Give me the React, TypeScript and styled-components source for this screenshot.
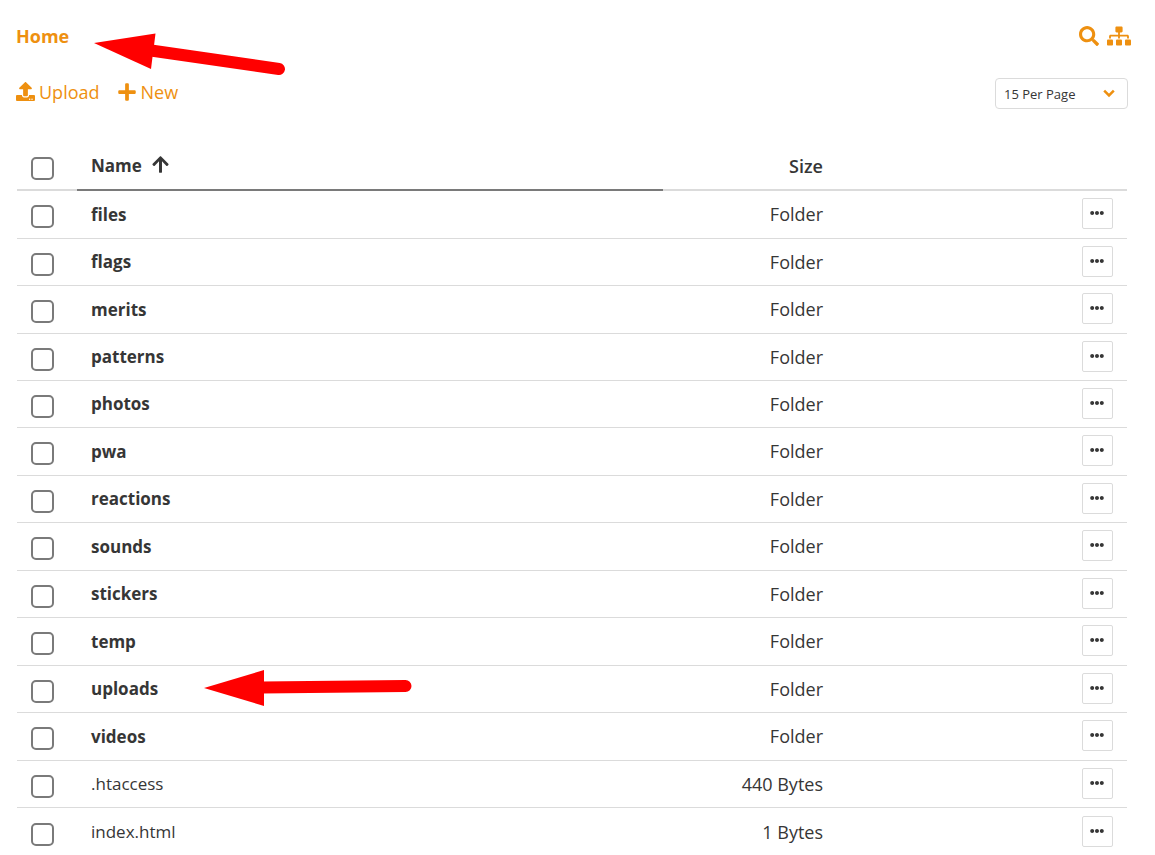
import React from "react";
import styled, { createGlobalStyle } from "styled-components";
import {
  FaArrowUp,
  FaEllipsisH,
  FaPlus,
  FaSearch,
  FaSitemap,
  FaUpload,
} from "react-icons/fa";

const accent = "#ee9010";
const ink = "#363636";
const line = "#dbdbdb";

const GlobalStyle = createGlobalStyle`
  *, *::before, *::after { box-sizing: border-box; }
  body {
    margin: 0;
    background: #fff;
    color: ${ink};
    font-family: "Open Sans", "Noto Sans", sans-serif;
    font-size: 18px;
    line-height: 24px;
  }
  button, select, input { font: inherit; color: inherit; }
`;

const Page = styled.main`
  padding: 0 24px 0 16px;
`;

const TopBar = styled.header`
  display: flex;
  align-items: center;
  justify-content: space-between;
  height: 72px;
`;

const Breadcrumb = styled.nav`
  position: relative;
`;

const HomeLink = styled.a`
  color: ${accent};
  font-weight: 700;
  text-decoration: none;
`;

const Tools = styled.div`
  display: flex;
  align-items: center;
  gap: 8px;
`;

const TextButton = styled.button`
  display: flex;
  align-items: center;
  gap: 4px;
  padding: 0;
  border: 0;
  background: none;
  color: ${accent};
  cursor: pointer;
`;

const Toolbar = styled.div`
  display: flex;
  align-items: center;
  justify-content: space-between;
  padding: 6px 3px 0 0;
`;

const Actions = styled.div`
  display: flex;
  gap: 17px;
  padding-bottom: 4px;
`;

const SelectBox = styled.div`
  position: relative;
  width: 133px;
  color: ${accent};

  svg {
    position: absolute;
    right: 13px;
    top: 10px;
    pointer-events: none;
  }
`;

const PerPage = styled.select`
  appearance: none;
  display: block;
  width: 100%;
  height: 31px;
  padding: 0 8px;
  border: 1px solid ${line};
  border-radius: 4px;
  background: #fff;
  color: ${ink};
  font-size: 13px;
`;

const TableArea = styled.section`
  padding: 34px 4px 0 1px;
`;

const Table = styled.table`
  width: 100%;
  table-layout: fixed;
  border-collapse: separate;
  border-spacing: 0;
`;

const Column = styled.col<{ $width?: number }>`
  width: ${(p) => (p.$width ? `${p.$width}px` : "auto")};
`;

const HeadCell = styled.th<{ $sorted?: boolean; $end?: boolean }>`
  height: 48px;
  padding: 0 14px;
  border-bottom: 2px solid ${(p) => (p.$sorted ? "#7a7a7a" : line)};
  text-align: ${(p) => (p.$end ? "right" : "left")};
  font-weight: 600;
`;

const SortButton = styled.button`
  display: flex;
  align-items: center;
  gap: 9px;
  padding: 0;
  border: 0;
  background: none;
  font-size: 17px;
  font-weight: 700;
  cursor: pointer;

  svg {
    margin-bottom: 3px;
  }
`;

const Row = styled.tr`
  height: 47px;

  &:nth-child(-2n + 3),
  &:nth-child(2n + 6) {
    height: 48px;
  }
  &:last-child td {
    border-bottom: 0;
  }
`;

const Cell = styled.td<{ $end?: boolean }>`
  padding: 0 14px 1px;
  border-bottom: 1px solid ${line};
  text-align: ${(p) => (p.$end ? "right" : "left")};
`;

const Checkbox = styled.input`
  appearance: none;
  display: block;
  width: 23px;
  height: 23px;
  margin: 4px 0 0;
  border: 2px solid #7a7a7a;
  border-radius: 5px;
  background: #fff;

  td & {
    margin-top: 5px;
  }
  &:checked {
    border-color: ${accent};
    background: ${accent};
  }
`;

const NameWrap = styled.div`
  position: relative;
`;

const NameLink = styled.a<{ $folder: boolean }>`
  color: inherit;
  font-size: 17px;
  font-weight: ${(p) => (p.$folder ? 700 : 400)};
  text-decoration: none;
`;

const MoreButton = styled.button`
  display: flex;
  justify-content: center;
  width: 31px;
  height: 31px;
  margin: 0 0 1px auto;
  padding: 7px 1px 0 0;
  border: 1px solid ${line};
  border-radius: 2px;
  background: #fff;
  cursor: pointer;
`;

const Pointer = styled.svg<{ $left: number; $top: number }>`
  position: absolute;
  left: ${(p) => p.$left}px;
  top: ${(p) => p.$top}px;
  pointer-events: none;
`;

type Entry = { name: string; size: string };

const entries: Entry[] = [
  { name: "files", size: "Folder" },
  { name: "flags", size: "Folder" },
  { name: "merits", size: "Folder" },
  { name: "patterns", size: "Folder" },
  { name: "photos", size: "Folder" },
  { name: "pwa", size: "Folder" },
  { name: "reactions", size: "Folder" },
  { name: "sounds", size: "Folder" },
  { name: "stickers", size: "Folder" },
  { name: "temp", size: "Folder" },
  { name: "uploads", size: "Folder" },
  { name: "videos", size: "Folder" },
  { name: ".htaccess", size: "440 Bytes" },
  { name: "index.html", size: "1 Bytes" },
];

function FileRow({ name, size }: Entry) {
  return (
    <Row>
      <Cell>
        <Checkbox type="checkbox" aria-label={`Select ${name}`} />
      </Cell>
      <Cell>
        <NameWrap>
          <NameLink href="#" $folder={size === "Folder"}>
            {name}
          </NameLink>
          {name === "uploads" && (
            <Pointer $left={113} $top={-7} width={210} height={38} viewBox="0 0 210 38" aria-hidden>
              <path d="M0 19 60 1V37Z" fill="red" />
              <path d="M58 18.500 201.500 17" stroke="red" strokeWidth="12" strokeLinecap="round" />
            </Pointer>
          )}
        </NameWrap>
      </Cell>
      <Cell $end>{size}</Cell>
      <Cell>
        <MoreButton type="button" aria-label={`Actions for ${name}`}>
          <FaEllipsisH size={14} />
        </MoreButton>
      </Cell>
    </Row>
  );
}

export default function App() {
  return (
    <Page>
      <GlobalStyle />
      <TopBar>
        <Breadcrumb aria-label="Breadcrumb">
          <HomeLink href="#">Home</HomeLink>
          <Pointer $left={78} $top={0} width={194} height={52} viewBox="0 0 194 52" aria-hidden>
            <path d="M0 19 61.500 9.500 57 45Z" fill="red" />
            <path d="M57 26.500 185 45" stroke="red" strokeWidth="12" strokeLinecap="round" />
          </Pointer>
        </Breadcrumb>
        <Tools>
          <TextButton type="button" aria-label="Search">
            <FaSearch size={20} />
          </TextButton>
          <TextButton type="button" aria-label="Folder tree">
            <FaSitemap size={24} />
          </TextButton>
        </Tools>
      </TopBar>
      <Toolbar>
        <Actions>
          <TextButton type="button">
            <FaUpload size={19} />
            Upload
          </TextButton>
          <TextButton type="button">
            <FaPlus size={20} />
            New
          </TextButton>
        </Actions>
        <SelectBox>
          <PerPage aria-label="Items per page" defaultValue="15">
            <option value="15">15 Per Page</option>
            <option value="30">30 Per Page</option>
            <option value="50">50 Per Page</option>
          </PerPage>
          <svg width={12} height={10} viewBox="0 0 12 10" aria-hidden>
            <path d="M1.200 2.600 6 7.400 10.800 2.600" fill="none" stroke="currentColor" strokeWidth="2.500" />
          </svg>
        </SelectBox>
      </Toolbar>
      <TableArea>
        <Table>
          <colgroup>
            <Column $width={60} />
            <Column />
            <Column $width={174} />
            <Column $width={290} />
          </colgroup>
          <thead>
            <tr>
              <HeadCell>
                <Checkbox type="checkbox" aria-label="Select all" />
              </HeadCell>
              <HeadCell $sorted aria-sort="ascending">
                <SortButton type="button">
                  Name
                  <FaArrowUp size={19} />
                </SortButton>
              </HeadCell>
              <HeadCell $end>Size</HeadCell>
              <HeadCell aria-label="Actions" />
            </tr>
          </thead>
          <tbody>
            {entries.map((entry) => (
              <FileRow key={entry.name} {...entry} />
            ))}
          </tbody>
        </Table>
      </TableArea>
    </Page>
  );
}
